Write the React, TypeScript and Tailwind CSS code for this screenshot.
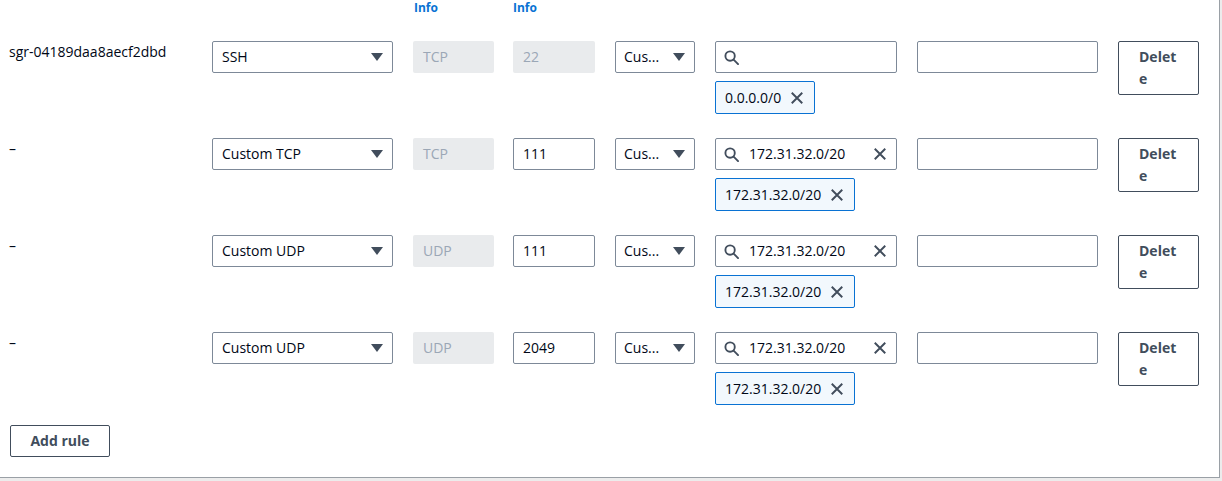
import React from "react";

const font = { fontFamily: '"Open Sans", "Noto Sans", Arial, sans-serif' };

function Caret() {
  return (
    <svg width="12" height="8" viewBox="0 0 12 8" className="shrink-0">
      <path d="M0 0 L12 0 L6 8 Z" fill="#414d5c" />
    </svg>
  );
}

function SearchIcon() {
  return (
    <svg width="15" height="15" viewBox="0 0 16 16" className="shrink-0" fill="none" stroke="#414d5c" strokeWidth="2">
      <circle cx="6.5" cy="6.5" r="5" />
      <path d="M10.5 10.5 L15 15" strokeLinecap="round" />
    </svg>
  );
}

function XIcon({ size = 14 }: { size?: number }) {
  return (
    <svg width={size} height={size} viewBox="0 0 16 16" className="shrink-0" fill="none" stroke="#414d5c" strokeWidth="2.2">
      <path d="M2 2 L14 14 M14 2 L2 14" />
    </svg>
  );
}

type Rule = { id: string; type: string; proto: string; port: string; cidr: string | null; chip: string };

const rules: Rule[] = [
  { id: "sgr-04189daa8aecf2dbd", type: "SSH", proto: "TCP", port: "22", cidr: null, chip: "0.0.0.0/0" },
  { id: "–", type: "Custom TCP", proto: "TCP", port: "111", cidr: "172.31.32.0/20", chip: "172.31.32.0/20" },
  { id: "–", type: "Custom UDP", proto: "UDP", port: "111", cidr: "172.31.32.0/20", chip: "172.31.32.0/20" },
  { id: "–", type: "Custom UDP", proto: "UDP", port: "2049", cidr: "172.31.32.0/20", chip: "172.31.32.0/20" },
];

function Row({ r }: { r: Rule }) {
  const disabledPort = r.port === "22";
  return (
    <div className="flex items-start h-[72px] text-sm text-[#000716]">
      <div className="w-[212px] pl-[9px] leading-[22px]">{r.id}</div>
      <div className="w-[181px] h-[32px] border border-[#7d8998] rounded-[2px] flex items-center justify-between pl-[9px] pr-[9px] leading-[22px]">
        <span>{r.type}</span>
        <Caret />
      </div>
      <div className="ml-[20px] w-[81px] h-[32px] rounded-[2px] bg-[#e9ebed] flex items-center pl-[10px] text-[#9ba7b6]">
        {r.proto}
      </div>
      <div
        className={
          disabledPort
            ? "ml-[19px] w-[82px] h-[32px] rounded-[2px] bg-[#e9ebed] flex items-center pl-[10px] text-[#9ba7b6]"
            : "ml-[19px] w-[82px] h-[32px] rounded-[2px] border border-[#7d8998] flex items-center pl-[9px]"
        }
      >
        {r.port}
      </div>
      <div className="ml-[20px] w-[80px] h-[32px] border border-[#7d8998] rounded-[2px] flex items-center justify-between pl-[8px] pr-[9px]">
        <span>Cus...</span>
        <Caret />
      </div>
      <div className="ml-[20px] w-[182px] flex flex-col gap-[8px]">
        <div className="h-[32px] border border-[#7d8998] rounded-[2px] flex items-center pl-[8px] pr-[9px]">
          <SearchIcon />
          {r.cidr ? (
            <>
              <span className="ml-[10px] flex-1">{r.cidr}</span>
              <XIcon />
            </>
          ) : null}
        </div>
        <div className="self-start h-[33px] border border-[#0972d3] bg-[#f2f8fd] rounded-[2px] flex items-center pl-[9px] pr-[10px] gap-[9px]">
          <span>{r.chip}</span>
          <XIcon />
        </div>
      </div>
      <div className="ml-[20px] w-[181px] h-[32px] border border-[#7d8998] rounded-[2px]" />
      <div className="ml-[20px] w-[81px] h-[54px] border border-[#414d5c] rounded-[2px] pl-[20px] pt-[4px] font-bold text-[#414d5c] leading-[22px]">
        Delet
        <br />e
      </div>
    </div>
  );
}

export default function App() {
  return (
    <div className="w-[1222px] h-[481px] bg-[#ececec] overflow-hidden" style={font}>
      <div className="w-[1220px] h-[478px] bg-white border-r border-b border-[#9aa0a6] flex flex-col">
        <div className="flex h-[41px] shrink-0 text-xs font-bold text-[#0972d3] leading-[14px] pt-[1px]">
          <div className="ml-[414px]">Info</div>
          <div className="ml-[75px]">Info</div>
        </div>
        <div className="flex flex-col gap-[25px]">
          {rules.map((r, i) => (
            <Row key={i} r={r} />
          ))}
        </div>
        <div className="mt-[21px] ml-[10px]">
          <div className="w-[100px] h-[32px] border border-[#414d5c] rounded-[2px] flex items-center justify-center font-bold text-sm text-[#414d5c]">
            Add rule
          </div>
        </div>
      </div>
    </div>
  );
}
